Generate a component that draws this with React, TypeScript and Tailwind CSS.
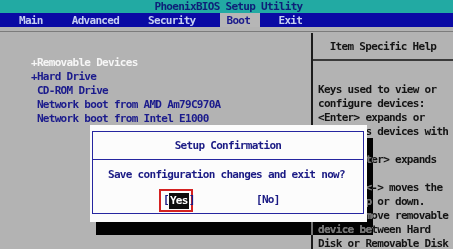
import React from 'react'

const mono = "font-['DejaVu_Sans_Mono','Liberation_Mono',monospace] text-[11px] font-bold tracking-[-0.7px]"

const bootItems = [
  { label: '+Removable Devices', active: true },
  { label: '+Hard Drive', active: false },
  { label: ' CD-ROM Drive', active: false },
  { label: ' Network boot from AMD Am79C970A', active: false },
  { label: ' Network boot from Intel E1000', active: false },
]

const helpLines = [
  'Keys used to view or',
  'configure devices:',
  '<Enter> expands or',
  'collapses devices with',
  'a + or -',
  '<Ctrl+Enter> expands',
  'all',
  '<+> and <-> moves the',
  'device up or down.',
  '<n> May move removable',
  'device between Hard',
  'Disk or Removable Disk',
]

export default function App() {
  return (
    <div className={`relative w-[453px] h-[249px] overflow-hidden bg-[#b3b3b3] ${mono}`}>
      {/* Title */}
      <div className="h-[13px] bg-[#22aaa3] text-[#0e1f78] leading-[14px] text-center pl-[4px]">
        PhoenixBIOS Setup Utility
      </div>

      {/* Menu bar */}
      <div className="h-[14px] bg-[#0a0aa4] flex items-stretch leading-[15px] text-[#c6d0f2]">
        <span className="ml-[19px]">Main</span>
        <span className="ml-[29px]">Advanced</span>
        <span className="ml-[29px]">Security</span>
        <span className="ml-[25px] w-[40px] pl-[6px] bg-[#b6b6b6] text-[#1b1b8c]">Boot</span>
        <span className="ml-[18px]">Exit</span>
      </div>

      {/* Body */}
      <div className="pt-[4px] h-[222px] flex flex-col">
        <div className="border-t border-[#7c7c7c] mb-[1px]" />
        <div className="flex-1 flex">
          <div className="w-[311px] pt-[23px] pl-[31px]">
            {bootItems.map(item => (
              <div
                key={item.label}
                className={`whitespace-pre leading-[14px] ${item.active ? 'text-[#f6f6f6]' : 'text-[#1b1b8c]'}`}
              >
                {item.label}
              </div>
            ))}
          </div>
          <div className="flex-1 border-l-2 border-[#1c1c1c] flex flex-col">
            <div className="h-[28px] pt-[3px] flex items-center justify-center border-b-2 border-[#3a3a3a] text-[#141414]">
              Item Specific Help
            </div>
            <div className="pt-[22px] pl-[5px] text-[#141414]">
              {helpLines.map((line, i) => (
                <div key={i} className="whitespace-pre leading-[14px]">{line}</div>
              ))}
            </div>
          </div>
        </div>
      </div>

      {/* Dialog shadow */}
      <div className="absolute left-[96px] top-[138px] w-[277px] h-[98px] [backdrop-filter:grayscale(1)_invert(1)_contrast(2.4)_brightness(.45)]" />

      {/* Setup Confirmation dialog */}
      <div className="absolute left-[90px] top-[125px] w-[277px] h-[97px] bg-[#fcfcfc] pt-[6px] pl-[2px] pr-[3px] pb-[8px]">
        <div className="h-full border border-[#2626a0] flex flex-col text-[#1a1a84]">
          <div className="h-[28px] pt-[2px] border-b border-[#2626a0] flex items-center justify-center">
            Setup Confirmation
          </div>
          <div className="pt-[8px] pl-[15px] leading-[14px] whitespace-pre">
            Save configuration changes and exit now?
          </div>
          <div className="mt-[7px] flex items-center">
            <div className="ml-[66px] w-[34px] h-[23px] border-2 border-[#d42222] flex items-center pl-[2px]">
              <span>[</span>
              <span className="bg-[#0c0c0c] text-white leading-[16px] px-[1px]">Yes</span>
              <span>]</span>
            </div>
            <span className="ml-[63px]">[No]</span>
          </div>
        </div>
      </div>
    </div>
  )
}
